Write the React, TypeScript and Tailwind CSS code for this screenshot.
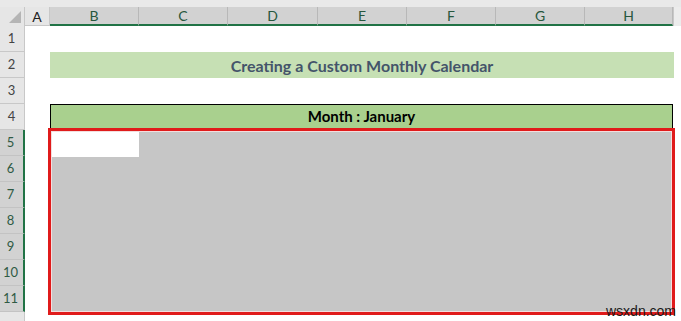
import React from "react";

const cols = [
  { l: "A", w: 25, sel: false },
  { l: "B", w: 89, sel: true },
  { l: "C", w: 89, sel: true },
  { l: "D", w: 90, sel: true },
  { l: "E", w: 89, sel: true },
  { l: "F", w: 89, sel: true },
  { l: "G", w: 89, sel: true },
  { l: "H", w: 88, sel: true },
];

const rows = [1, 2, 3, 4, 5, 6, 7, 8, 9, 10, 11];

export default function App() {
  return (
    <div
      className="relative w-[681px] h-[321px] overflow-hidden bg-white"
      style={{ fontFamily: "Lato, 'Open Sans', sans-serif" }}
    >
      <div className="h-[7px] bg-[#e9e9e9]" />
      {/* column header */}
      <div className="flex h-[19px] bg-[#e6e6e6]">
        <div className="relative w-[25px] h-full border-r border-[#c8c8c8] bg-[#e6e6e6]">
          <svg className="absolute right-[3px] bottom-[3px]" width="12" height="12" viewBox="0 0 12 12">
            <polygon points="12,0 12,12 0,12" fill="#b5b5b5" />
          </svg>
        </div>
        {cols.map((c) => (
          <div
            key={c.l}
            style={{ width: c.w }}
            className={
              c.sel
                ? "h-full flex items-center justify-center bg-[#d2d2d2] border-r border-[#b8b8b8] border-b-2 border-b-[#217346] text-[14px] text-[#27573d]"
                : "h-full flex items-center justify-center bg-[#e6e6e6] border-r border-[#c8c8c8] border-b border-b-[#c8c8c8] text-[14px] text-[#222]"
            }
          >
            {c.l}
          </div>
        ))}
        <div className="flex-1 h-full bg-[#ececec] border-l border-[#c8c8c8]" />
      </div>

      {/* body */}
      <div className="flex">
        <div className="w-[25px] flex flex-col">
          {rows.map((r) => (
            <div
              key={r}
              className={
                r >= 5
                  ? "h-[26px] flex items-center justify-center bg-[#d2d2d2] border-r-2 border-r-[#217346] border-b border-b-[#c3c3c3] text-[13px] text-[#2f5a44] pr-[2px]"
                  : "h-[26px] flex items-center justify-center bg-[#e6e6e6] border-r border-r-[#c8c8c8] border-b border-b-[#c8c8c8] text-[13px] text-[#444] pr-[1px]"
              }
            >
              {r}
            </div>
          ))}
          <div className="h-[20px] bg-[#e6e6e6] border-r border-r-[#c8c8c8]" />
        </div>

        <div className="flex-1 flex flex-col">
          <div className="h-[26px]" />
          <div className="h-[26px] ml-[25px] w-[624px] bg-[#c6e0b4] flex items-center justify-center">
            <span className="text-[16px] font-bold text-[#44546a] mt-[2px]">
              Creating a Custom Monthly Calendar
            </span>
          </div>
          <div className="h-[26px]" />
          <div className="h-[26px] ml-[25px] w-[623px] bg-[#a9d08e] border border-black flex items-center justify-center">
            <span className="text-[15px] font-bold text-black mb-[2px]">Month : January</span>
          </div>
          <div className="ml-[23px] -mt-[2px] w-[627px] h-[187px] border-[3px] border-[#e01b1b]">
            <div className="w-full h-full border border-[#f3dede] bg-[#c6c6c6]">
              <div className="w-[87px] h-[25px] bg-white" />
            </div>
          </div>
        </div>
      </div>

      <div
        className="absolute left-[606px] top-[303px] text-[14px] leading-[16px] text-[#1a1a1a]"
        style={{ fontFamily: "'Liberation Sans', Arial, sans-serif" }}
      >
        wsxdn.com
      </div>
    </div>
  );
}
